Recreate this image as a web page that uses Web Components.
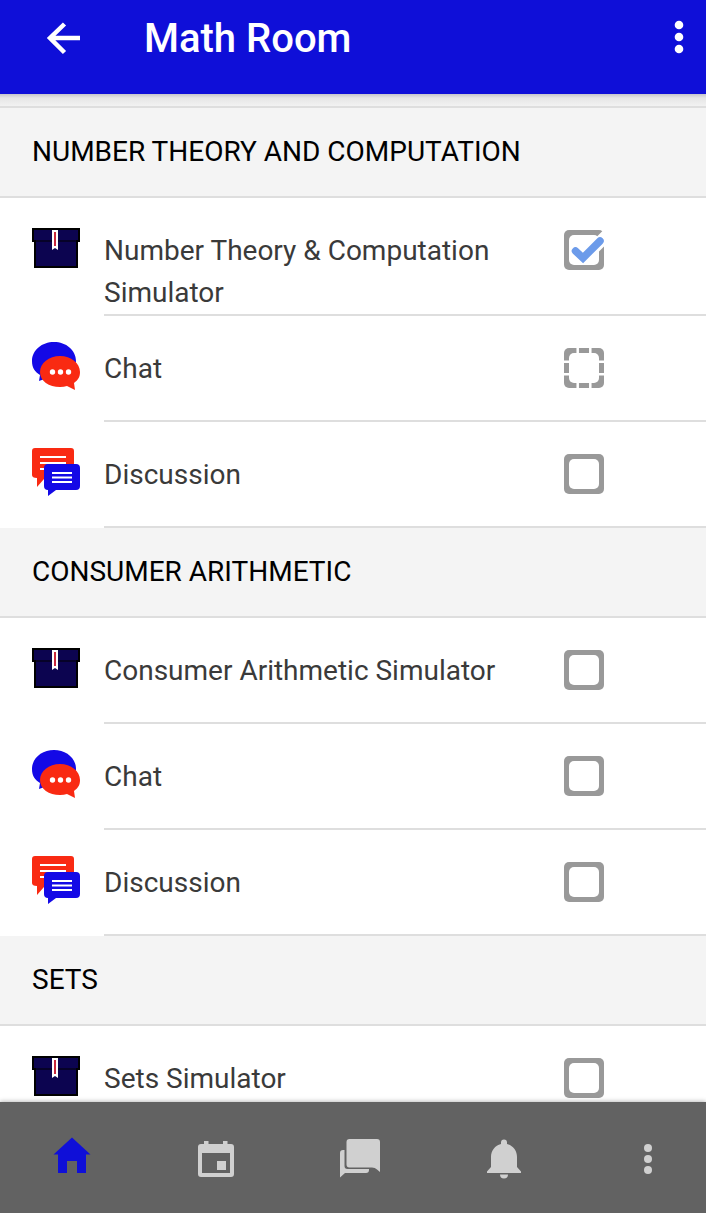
<!DOCTYPE html>
<html lang="en">
<head>
<meta charset="utf-8">
<meta name="viewport" content="width=device-width, initial-scale=1">
<title>Math Room</title>
<style>
    body {
        margin: 0;
        height: 100vh;
        overflow: hidden;
        display: flex;
        flex-direction: column;
        background: #fff;
        color: #3a3a3a;
        font-family: Roboto, "Liberation Sans", sans-serif;
        font-size: 28px;
        line-height: 42px;
    }
    main {
        flex: 1;
        min-height: 0;
        overflow: hidden;
        padding-top: 12px;
        background: linear-gradient(#c6c6cc, #e6e6e6 4px, #f2f2f2 12px, #fff 12px);
    }
    course-section:first-child {
        border-top: 2px solid #dedede;
    }
</style>
</head>
<body>

<room-header>Math Room</room-header>

<main>
    <course-section name="NUMBER THEORY AND COMPUTATION">
        <course-item icon="box" state="done">Number Theory &amp; Computation Simulator</course-item>
        <course-item icon="chat" state="auto">Chat</course-item>
        <course-item icon="forum">Discussion</course-item>
    </course-section>
    <course-section name="CONSUMER ARITHMETIC">
        <course-item icon="box">Consumer Arithmetic Simulator</course-item>
        <course-item icon="chat">Chat</course-item>
        <course-item icon="forum">Discussion</course-item>
    </course-section>
    <course-section name="SETS">
        <course-item icon="box">Sets Simulator</course-item>
    </course-section>
</main>

<tab-bar>
    <tab-link icon="home" name="Home" active></tab-link>
    <tab-link icon="calendar" name="Calendar"></tab-link>
    <tab-link icon="messages" name="Messages"></tab-link>
    <tab-link icon="bell" name="Notifications"></tab-link>
    <tab-link icon="more" name="More"></tab-link>
</tab-bar>

<script>
const ICONS = {
    back: '<path d="M40 23H11M24.500 9L10 23l14.500 14.500" fill="none" stroke="currentColor" stroke-width="4.500"/>',
    more: '<g fill="currentColor"><circle cx="24" cy="14" r="4"/><circle cx="24" cy="25" r="4"/><circle cx="24" cy="36" r="4"/></g>',
    menu: '<g fill="currentColor"><circle cx="24" cy="10" r="4.300"/><circle cx="24" cy="22" r="4.300"/><circle cx="24" cy="34" r="4.300"/></g>',
    home: '<path fill="currentColor" d="M24 3.500L42.500 20.500H38V39H29V27H19V39H10V20.500H5.500z"/>',
    calendar: '<path fill="currentColor" fill-rule="evenodd" d="M12 10V7h4.500v3H31V7h4.500v3H39a3 3 0 0 1 3 3v27a3 3 0 0 1-3 3H9a3 3 0 0 1-3-3V13a3 3 0 0 1 3-3zM10 19v20h28V19zM25 27h9v9h-9z"/>',
    messages: '<path fill="currentColor" d="M13.500 5H41a3 3 0 0 1 3 3v30l-3-2.500q-2-2-5-2H13.500a3 3 0 0 1-3-3V8a3 3 0 0 1 3-3z"/><path fill="currentColor" d="M7 16h1.500v16a3 3 0 0 0 3 3H33v1a3 3 0 0 1-3 3H9l-5 4.500V19a3 3 0 0 1 3-3z"/>',
    bell: '<path fill="currentColor" d="M24 5.500a3 3 0 0 1 3 3v1.500c6 1.500 10 6.500 10 13v10l4 4.500V39H7v-1.500l4-4.500V23c0-6.500 4-11.500 10-13V8.500a3 3 0 0 1 3-3zM20 40.500h8a4 4 0 0 1-8 0z"/>',
    box: '<path fill="#000" d="M0 4h48v14h-2v26H2V18H0z"/><path fill="#0c0450" d="M2 6h44v10H2zM4 16h40v26H4z"/><path fill="#000" opacity=".5" d="M2 16h44v2H2z"/><path fill="#fff" d="M20 6h6v20l-3-2-3 2z"/><path fill="#c8283c" d="M22 8h2v14h-2z"/>',
    chat: '<path fill="#1409e6" d="M22 0C10 0 0 8 0 19c0 7 3 11 8 14l-1 6 11-4c16 2 26-5 26-16S34 0 22 0z"/><path fill="#f92a12" d="M28 14c11 0 20 7 20 16 0 5-2 8-6 11l1 7-8-4q-3 1-7 1C17 45 8 39 8 30s9-16 20-16z"/><g fill="#fff"><circle cx="20.500" cy="30" r="2.700"/><circle cx="28.500" cy="30" r="2.700"/><circle cx="36.500" cy="30" r="2.700"/></g>',
    forum: '<path fill="#f92a12" d="M3 0h36q3 0 3 3v25q0 3-3 3H12l-7 8v-9q-5 0-5-3V3q0-3 3-3z"/><path stroke="#fff" stroke-width="2" d="M8 9h26M8 15h26M8 21h8"/><path fill="#1409e6" d="M16 16h28q4 0 4 4v18q0 4-4 4H24l-8 6v-6q-4 0-4-4V20q0-4 4-4z"/><path stroke="#fff" stroke-width="2" d="M20 25h20M20 29.500h20M20 34h20"/>',
};

// completion box, 40x40
const FRAME = '<rect width="40" height="40" rx="5" fill="#999"/><rect x="5" y="5" width="30" height="30" rx="5" fill="#fff"/>';
const CHECKS = {
    none: FRAME,
    auto: FRAME + '<path stroke="#fff" stroke-width="2.500" d="M13.700 0v40M26.300 0v40M0 13.700h40M0 26.300h40"/>',
    done: FRAME + '<path fill="none" stroke="#fff" stroke-width="12" d="M28 20L44 4"/><path fill="none" stroke="#6c9bea" stroke-width="7.500" stroke-linecap="round" d="M11.500 21L19 28 36 11"/>',
};

function svg(name) {
    return `<svg width="48" height="48" viewBox="0 0 48 48" aria-hidden="true">${ICONS[name]}</svg>`;
}

class RoomHeader extends HTMLElement {
    constructor() {
        super();
        this.attachShadow({mode: 'open'}).innerHTML = `
      <style>
        :host { display: block; background: #0f0fd8; color: #fff; }
        header { display: flex; align-items: center; height: 78px; padding: 0 3px 16px 40px; }
        h1 { flex: 1; margin: 0 0 0 56px; font-size: 40px; line-height: 48px; font-weight: 500; }
        button { display: flex; padding: 0; border: 0; background: none; color: inherit; }
      </style>
      <header>
        <button type="button" aria-label="Back">${svg('back')}</button>
        <h1><slot></slot></h1>
        <button type="button" aria-label="Menu">${svg('menu')}</button>
      </header>
    `;
    }
}
customElements.define('room-header', RoomHeader);


class CourseSection extends HTMLElement {
    constructor() {
        super();
        this.attachShadow({mode: 'open'}).innerHTML = `
      <style>
        :host { display: block; }
        h2 {
          margin: 0;
          padding: 23px 32px;
          border-bottom: 2px solid #dedede;
          background: #f4f4f4;
          color: #000;
          font-size: 28px;
          font-weight: 400;
        }
      </style>
      <h2></h2>
      <slot></slot>
    `;
    }

    connectedCallback() {
        this.shadowRoot.querySelector('h2').textContent = this.getAttribute('name');
    }
}
customElements.define('course-section', CourseSection);


class CourseItem extends HTMLElement {
    constructor() {
        super();
        this.attachShadow({mode: 'open'});
    }

    connectedCallback() {
        const state = this.getAttribute('state') ?? 'none';

        this.shadowRoot.innerHTML = `
      <style>
        :host { display: flex; gap: 24px; padding-left: 32px; background: #fff; }
        .icon { flex: none; height: 48px; padding-top: 26px; }
        .icon svg { display: block; }
        .row {
          flex: 1;
          display: flex;
          align-items: flex-start;
          gap: 24px;
          box-sizing: border-box;
          min-height: 106px;
          padding: 32px 102px 0 0;
          border-bottom: 2px solid #dedede;
        }
        label { flex: 1; }
        .check { display: grid; flex: none; }
        .check > * { grid-area: 1 / 1; }
        input { appearance: none; width: 40px; height: 40px; margin: 0; }
      </style>
      <span class="icon">${svg(this.getAttribute('icon'))}</span>
      <div class="row">
        <label for="done"><slot></slot></label>
        <span class="check">
          <svg width="40" height="40" viewBox="0 0 40 40" aria-hidden="true">${CHECKS[state]}</svg>
          <input type="checkbox" id="done" ${state === 'done' ? 'checked' : ''}>
        </span>
      </div>
    `;
    }
}
customElements.define('course-item', CourseItem);


class TabBar extends HTMLElement {
    constructor() {
        super();
        this.attachShadow({mode: 'open'}).innerHTML = `
      <style>
        :host { display: block; background: #626262; box-shadow: 0 -1px 4px rgba(0, 0, 0, .25); z-index: 1; }
        nav { display: flex; }
      </style>
      <nav><slot></slot></nav>
    `;
    }
}
customElements.define('tab-bar', TabBar);


class TabLink extends HTMLElement {
    constructor() {
        super();
        this.attachShadow({mode: 'open'});
    }

    connectedCallback() {
        this.shadowRoot.innerHTML = `
      <style>
        :host { flex: 1 0 144px; color: #d0d0d0; }
        :host([active]) { color: #0f0fd8; }
        a { display: flex; justify-content: center; padding: 32px 0 31px; color: inherit; }
      </style>
      <a href="#${this.getAttribute('icon')}" aria-label="${this.getAttribute('name')}">${svg(this.getAttribute('icon'))}</a>
    `;
    }
}
customElements.define('tab-link', TabLink);
</script>
</body>
</html>
